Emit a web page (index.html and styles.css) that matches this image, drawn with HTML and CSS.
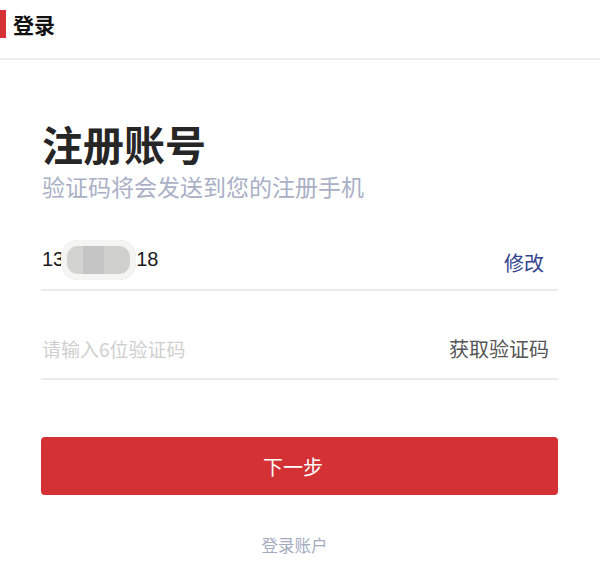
FILE: index.html
```html
<!DOCTYPE html>
<html lang="zh-CN">
<head>
<meta charset="utf-8">
<title>登录</title>
<link rel="stylesheet" href="styles.css">
</head>
<body>
<header class="topbar">
  <h1 class="topbar-title">登录</h1>
</header>
<main class="panel">
  <h2 class="panel-title">注册账号</h2>
  <p class="panel-sub">验证码将会发送到您的注册手机</p>
  <div class="field field-phone">
    <span class="phone">13<span class="mask" aria-hidden="true"></span>18</span>
    <a class="field-action action-edit">修改</a>
  </div>
  <div class="field field-code">
    <span class="placeholder">请输入6位验证码</span>
    <a class="field-action action-code">获取验证码</a>
  </div>
  <button class="btn-next" type="button">下一步</button>
  <div class="login-link">登录账户</div>
</main>
</body>
</html>
```
FILE: styles.css
```css
* { box-sizing: border-box; }
html, body { margin: 0; padding: 0; background: #fff; }
body {
  font-family: "Noto Sans CJK SC", "Noto Sans", sans-serif;
  color: #222;
  width: 600px;
  height: 585px;
  overflow: hidden;
}
.topbar {
  height: 60px;
  border-bottom: 2px solid #eeeeee;
  padding-top: 10px;
}
.topbar-title {
  margin: 0;
  border-left: 6px solid #d63236;
  padding-left: 7px;
  height: 28px;
  line-height: 28px;
  font-size: 21px;
  font-weight: 700;
  color: #111;
}
.panel {
  padding: 0 42px 0 41px;
  display: flex;
  flex-direction: column;
}
.panel-title {
  margin: 61px 0 0;
  font-size: 41px;
  line-height: 44px;
  font-weight: 700;
  color: #262626;
  padding-left: 1px;
}
.panel-sub {
  margin: 7px 0 0;
  font-size: 23px;
  line-height: 28px;
  color: #a9b0c6;
  padding-left: 1px;
}
.field {
  height: 60px;
  border-bottom: 2px solid #ebebeb;
  display: flex;
  align-items: center;
  justify-content: space-between;
  padding-left: 1px;
}
.field-phone { margin-top: 31px; }
.field-code { margin-top: 29px; }
.phone {
  font-family: "Liberation Sans", "Noto Sans CJK SC", sans-serif;
  font-size: 20px;
  color: #1a1a1a;
  display: flex;
  align-items: center;
  margin-top: -2px;
}
.mask {
  display: inline-block;
  width: 75px;
  height: 40px;
  margin: 2px 0 0 -3px;
  border-radius: 17px;
  background:
    linear-gradient(90deg, #d2d2d0 0 30%, #c5c5c5 30% 58%, #d0d0ce 58% 100%);
  box-shadow: 0 0 0 6px #f4f4f3 inset;
  filter: blur(0.5px);
}
.placeholder {
  font-size: 19px;
  color: #cfcfcf;
  margin-top: -2px;
}
.field-action {
  font-size: 20px;
  text-decoration: none;
  cursor: pointer;
}
.action-edit {
  color: #34438f;
  margin-right: 14px;
  margin-top: 4px;
}
.action-code {
  color: #555555;
  margin-right: 9px;
  margin-top: -2px;
}
.btn-next {
  margin-top: 57px;
  height: 58px;
  border: 0;
  border-radius: 4px;
  background: #d33134;
  color: #fff;
  font-family: "Noto Sans CJK SC", sans-serif;
  font-size: 20px;
  padding: 0 13px 0 0;
}
.login-link {
  margin-top: 38px;
  text-align: center;
  font-size: 16.5px;
  line-height: 24px;
  color: #a4abbf;
  padding-right: 10px;
}
```
